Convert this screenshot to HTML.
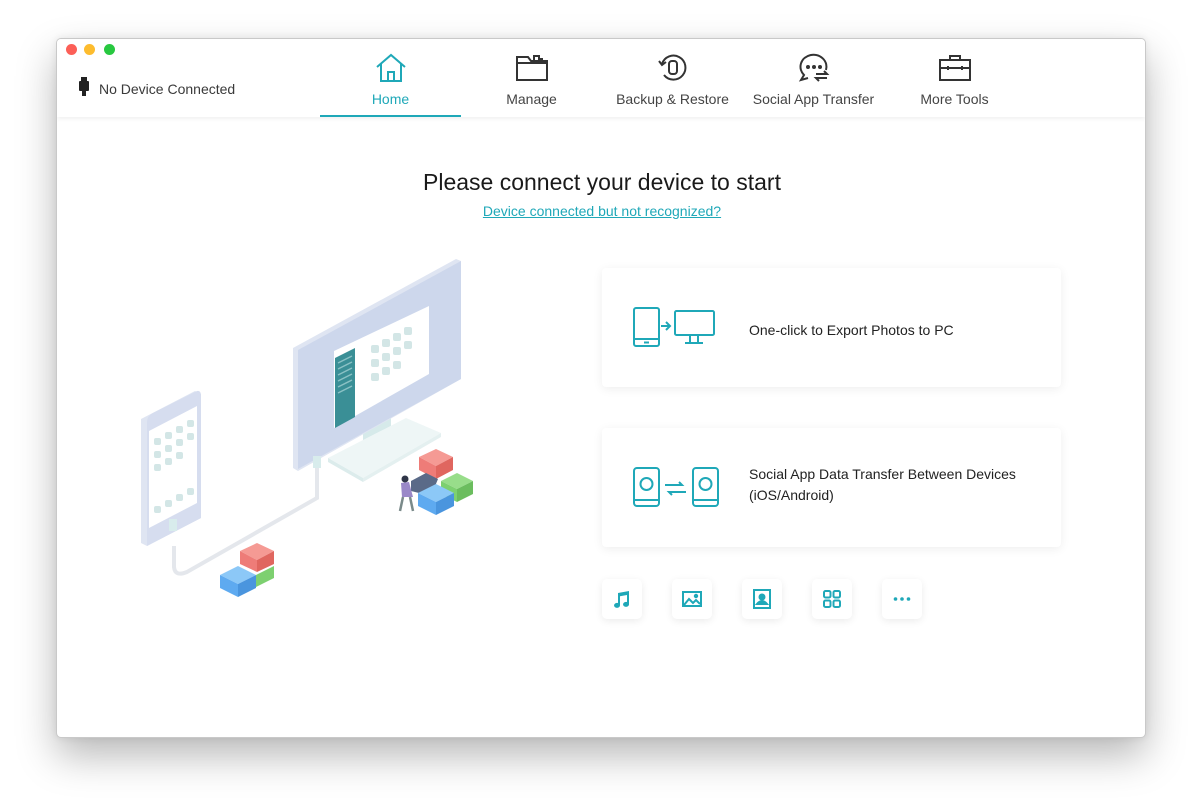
<!DOCTYPE html>
<html><head><meta charset="utf-8">
<style>
*{margin:0;padding:0;box-sizing:border-box}
body{width:1202px;height:812px;background:#fff;font-family:"Liberation Sans",Arial,sans-serif;position:relative;overflow:hidden}
.win{position:absolute;left:56px;top:38px;width:1090px;height:700px;background:#fff;border-radius:5px;border:1px solid #c9c9c9;box-shadow:0 18px 40px rgba(0,0,0,.28),0 0 8px rgba(0,0,0,.08);overflow:hidden}
.hdr{position:absolute;left:0;top:0;width:100%;height:78px;background:#fff;box-shadow:0 2px 4px rgba(0,0,0,.06);z-index:2}
.dot{position:absolute;top:5px;width:11px;height:11px;border-radius:50%}
.nd{position:absolute;left:42px;top:42px;font-size:14px;color:#3a3a3a}
.tab{position:absolute;top:0;width:141px;height:78px;text-align:center;font-size:14px;color:#444}
.tab svg{position:absolute;left:50%;top:14px;margin-left:-18px}
.tab span{position:absolute;left:0;right:0;top:52px}
.tab.on{color:#1fa8b8}
.tab.on:after{content:"";position:absolute;left:0;right:0;bottom:0;height:2px;background:#1fa8b8}
h1{position:absolute;left:0;width:1090px;top:130px;text-align:center;font-weight:normal;font-size:23px;color:#1a1a1a}
.lnk{position:absolute;left:0;width:1090px;top:164px;text-align:center;font-size:14px;color:#1fa8b8;text-decoration:underline}
.card{position:absolute;left:545px;width:459px;height:119px;background:#fff;border-radius:4px;box-shadow:0 2px 10px rgba(0,0,0,.07)}
.card .t{position:absolute;left:147px;font-size:14px;color:#222;line-height:21px}
.sb{position:absolute;top:540px;width:40px;height:40px;background:#fff;border-radius:5px;box-shadow:0 2px 8px rgba(0,0,0,.08)}
.sb svg{position:absolute;left:10px;top:10px}
</style></head><body>
<div class="win">
<svg style="position:absolute;left:-56px;top:-38px" width="1202" height="812" viewBox="0 0 1202 812">
<!-- stand -->
<path d="M362 420 L390 406 L390 440 L362 452 Z" fill="#d6eaea"/>
<path d="M327 457 L405 417 L440 432 L362 477 Z" fill="#eef6f6"/>
<path d="M327 457 L362 477 L362 481 L327 461 Z" fill="#dcecec"/>
<path d="M362 477 L440 432 L440 436 L362 481 Z" fill="#e4f0f0"/>
<!-- monitor -->
<path d="M292 347 L455 258 L460 260 L460 378 L297 470 L292 467 Z" fill="#dfe5f2"/>
<path d="M297 349 L460 260 L460 378 L297 468 Z" fill="#cdd7ec"/>
<path d="M333 350 L428 305 L428 373 L333 427 Z" fill="#fff"/>
<path d="M334 357 L354 347 L354 416 L334 427 Z" fill="#3a8f96"/>
<g stroke="#8ac1c4" stroke-width="1.5"><path d="M337 362 L351 355 M337 368 L351 361 M337 374 L351 367 M337 380 L351 373 M337 386 L351 379 M337 392 L351 385"/></g>
<g fill="#d3e6e6">
<rect x="370" y="344" width="8" height="8" rx="2"/><rect x="381" y="338" width="8" height="8" rx="2"/><rect x="392" y="332" width="8" height="8" rx="2"/><rect x="403" y="326" width="8" height="8" rx="2"/>
<rect x="370" y="358" width="8" height="8" rx="2"/><rect x="381" y="352" width="8" height="8" rx="2"/><rect x="392" y="346" width="8" height="8" rx="2"/><rect x="403" y="340" width="8" height="8" rx="2"/>
<rect x="370" y="372" width="8" height="8" rx="2"/><rect x="381" y="366" width="8" height="8" rx="2"/><rect x="392" y="360" width="8" height="8" rx="2"/>
</g>
<!-- cable -->
<path d="M173 545 L173 566 Q174 576 186 571 L316 497 L316 463" fill="none" stroke="#e4e7ec" stroke-width="4"/>
<rect x="312" y="455" width="8" height="12" fill="#d8ecec"/>
<!-- phone -->
<path d="M140 418 L194 390 L200 393 L200 517 L146 545 L140 542 Z" fill="#dfe5f2"/>
<path d="M146 421 Q146 415 152 412 L196 390 Q200 389 200 395 L200 517 L146 545 Z" fill="#d6ddef"/>
<path d="M148 430 L196 405 L196 502 L148 527 Z" fill="#fff"/>
<rect x="168" y="518" width="8" height="12" fill="#d8ecec"/>
<g fill="#d3e6e6"><rect x="153" y="437" width="7" height="7" rx="2"/><rect x="164" y="431" width="7" height="7" rx="2"/><rect x="175" y="425" width="7" height="7" rx="2"/><rect x="186" y="419" width="7" height="7" rx="2"/>
<rect x="153" y="450" width="7" height="7" rx="2"/><rect x="164" y="444" width="7" height="7" rx="2"/><rect x="175" y="438" width="7" height="7" rx="2"/><rect x="186" y="432" width="7" height="7" rx="2"/>
<rect x="153" y="463" width="7" height="7" rx="2"/><rect x="164" y="457" width="7" height="7" rx="2"/><rect x="175" y="451" width="7" height="7" rx="2"/>
<rect x="153" y="505" width="7" height="7" rx="2"/><rect x="164" y="499" width="7" height="7" rx="2"/><rect x="175" y="493" width="7" height="7" rx="2"/><rect x="186" y="487" width="7" height="7" rx="2"/></g>
<!-- left blocks -->
<path d="M255 574 L273 565 L273 577 L255 586 Z" fill="#7dd070"/>
<path d="M239 550 L256 542 L273 550 L256 559 Z" fill="#f59a94"/>
<path d="M239 550 L256 559 L256 571 L239 563 Z" fill="#ee7c78"/>
<path d="M256 559 L273 550 L273 563 L256 571 Z" fill="#e0665f"/>
<path d="M219 574 L237 565 L255 574 L237 583 Z" fill="#8cc8f7"/>
<path d="M219 574 L237 583 L237 596 L219 587 Z" fill="#5eaaf0"/>
<path d="M237 583 L255 574 L255 587 L237 596 Z" fill="#4a95de"/>
<!-- right blocks -->
<path d="M440 480 L456 472 L472 480 L456 488 Z" fill="#98dd8a"/>
<path d="M456 488 L472 480 L472 493 L456 501 Z" fill="#6bbd5e"/>
<path d="M440 480 L456 488 L456 501 L440 493 Z" fill="#7dd070"/>
<path d="M418 456 L435 448 L452 456 L435 465 Z" fill="#f59a94"/>
<path d="M418 456 L435 465 L435 478 L418 469 Z" fill="#ee7c78"/>
<path d="M435 465 L452 456 L452 469 L435 478 Z" fill="#e0665f"/>
<path d="M410 480 L425 472 L437 478 L430 495 L410 490 Z" fill="#5a6a88"/>
<path d="M417 492 L435 483 L453 492 L435 501 Z" fill="#8cc8f7"/>
<path d="M417 492 L435 501 L435 514 L417 505 Z" fill="#5eaaf0"/>
<path d="M435 501 L453 492 L453 505 L435 514 Z" fill="#4a95de"/>
<circle cx="404" cy="478" r="3.5" fill="#2f3548"/>
<path d="M400 482 L408 481 L412 496 L401 496 Z" fill="#9a88c8"/>
<path d="M402 496 L399 510 M409 496 L412 510" stroke="#7a8a8a" stroke-width="2.5"/>
</svg>
<div class="hdr">
<div class="dot" style="left:9px;background:#fc5f57"></div>
<div class="dot" style="left:27px;background:#fdbc2e"></div>
<div class="dot" style="left:47px;background:#28c840"></div>
<svg style="position:absolute;left:22px;top:38px" width="10" height="20"><rect x="2" y="0" width="6" height="5" fill="#222"/><rect x="0" y="4" width="10" height="10" rx="1" fill="#222"/><rect x="3" y="13" width="4" height="6" fill="#222"/></svg>
<div class="nd">No Device Connected</div>
<div class="tab on" style="left:263px"><svg width="36" height="30" viewBox="0 0 36 30" fill="none" stroke="#1fa8b8" stroke-width="2"><path d="M4 14 L18 2 L32 14"/><path d="M8 11 V28 H28 V11"/><path d="M15 28 V19 H21 V28"/></svg><span>Home</span></div>
<div class="tab" style="left:404px"><svg width="36" height="30" viewBox="0 0 36 30" fill="none" stroke="#333" stroke-width="2"><path d="M3 4 H14 L17 8 H33 V27 H3 Z"/><path d="M3 10 H33"/><path d="M20 8 V3 H25 V8 M25 6 H28 V8"/></svg><span>Manage</span></div>
<div class="tab" style="left:545px"><svg width="36" height="30" viewBox="0 0 36 30" fill="none" stroke="#333" stroke-width="2"><path d="M7 11 A12 12 0 1 1 9 22"/><path d="M4 8 L7 12 L11 9"/><rect x="14" y="8" width="8" height="13" rx="3"/></svg><span>Backup &amp; Restore</span></div>
<div class="tab" style="left:686px"><svg width="36" height="30" viewBox="0 0 36 30" fill="none" stroke="#333" stroke-width="2"><path d="M12 25 L5 27 L8 22 A13 12 0 1 1 30 17"/><circle cx="12" cy="14" r="1" fill="#333"/><circle cx="18" cy="14" r="1" fill="#333"/><circle cx="24" cy="14" r="1" fill="#333"/><path d="M20 21 H31 L28 18 M31 25 H20 L23 28"/></svg><span>Social App Transfer</span></div>
<div class="tab" style="left:827px"><svg width="36" height="30" viewBox="0 0 36 30" fill="none" stroke="#333" stroke-width="2"><rect x="3" y="7" width="30" height="20"/><path d="M13 7 V3 H23 V7"/><path d="M3 15 H33"/><path d="M11 13 V17 M25 13 V17"/></svg><span>More Tools</span></div>
</div>
<h1>Please connect your device to start</h1>
<div class="lnk">Device connected but not recognized?</div>

<div class="card" style="top:229px">
<svg style="position:absolute;left:28px;top:39px" width="90" height="42" viewBox="0 0 90 42" fill="none" stroke="#1fa8b8" stroke-width="2"><rect x="4" y="1" width="25" height="38" rx="2"/><path d="M4 32 H29 M14 35.5 H19"/><path d="M31 19 H39 M36 15 L40 19 L36 23"/><rect x="45" y="4" width="39" height="24" rx="1.5"/><path d="M60 28 V35 M68 28 V35 M55 36 H73"/></svg>
<div class="t" style="top:52px">One-click to Export Photos to PC</div>
</div>
<div class="card" style="top:389px">
<svg style="position:absolute;left:28px;top:39px" width="90" height="42" viewBox="0 0 90 42" fill="none" stroke="#1fa8b8" stroke-width="2"><rect x="4" y="1" width="25" height="38" rx="3"/><path d="M4 33 H29"/><circle cx="16.5" cy="17" r="6"/><rect x="63" y="1" width="25" height="38" rx="3"/><path d="M63 33 H88"/><circle cx="75.5" cy="17" r="6"/><path d="M35 18 H52 L49 15 M56 25 H39 L42 28"/></svg>
<div class="t" style="top:36px">Social App Data Transfer Between Devices<br>(iOS/Android)</div>
</div>

<div class="sb" style="left:545px"><svg width="20" height="20" viewBox="0 0 20 20" fill="#1fa8b8"><path d="M6 4 L17 2 V15 A3 2.5 0 1 1 15 13 V6 L8 7.3 V16 A3 2.5 0 1 1 6 14 Z"/></svg></div>
<div class="sb" style="left:615px"><svg width="20" height="20" viewBox="0 0 20 20" fill="none" stroke="#1fa8b8" stroke-width="2"><rect x="1" y="3" width="18" height="14"/><path d="M2 16 L7 10 L11 14 L14 11 L18 15"/><circle cx="14" cy="7" r="1.2" fill="#1fa8b8"/></svg></div>
<div class="sb" style="left:685px"><svg width="20" height="20" viewBox="0 0 20 20" fill="none" stroke="#1fa8b8" stroke-width="2"><rect x="2" y="1" width="16" height="18"/><circle cx="10" cy="8" r="2.5" fill="#1fa8b8"/><path d="M5 15 Q10 9 15 15 Z" fill="#1fa8b8"/></svg></div>
<div class="sb" style="left:755px"><svg width="20" height="20" viewBox="0 0 20 20" fill="none" stroke="#1fa8b8" stroke-width="2"><rect x="2" y="2" width="6.5" height="6.5" rx="1.5"/><rect x="11.5" y="2" width="6.5" height="6.5" rx="1.5"/><rect x="2" y="11.5" width="6.5" height="6.5" rx="1.5"/><rect x="11.5" y="11.5" width="6.5" height="6.5" rx="1.5"/></svg></div>
<div class="sb" style="left:825px"><svg width="20" height="20" viewBox="0 0 20 20" fill="#1fa8b8"><circle cx="3.5" cy="10" r="1.8"/><circle cx="10" cy="10" r="1.8"/><circle cx="16.5" cy="10" r="1.8"/></svg></div>
</div>
</body></html>
